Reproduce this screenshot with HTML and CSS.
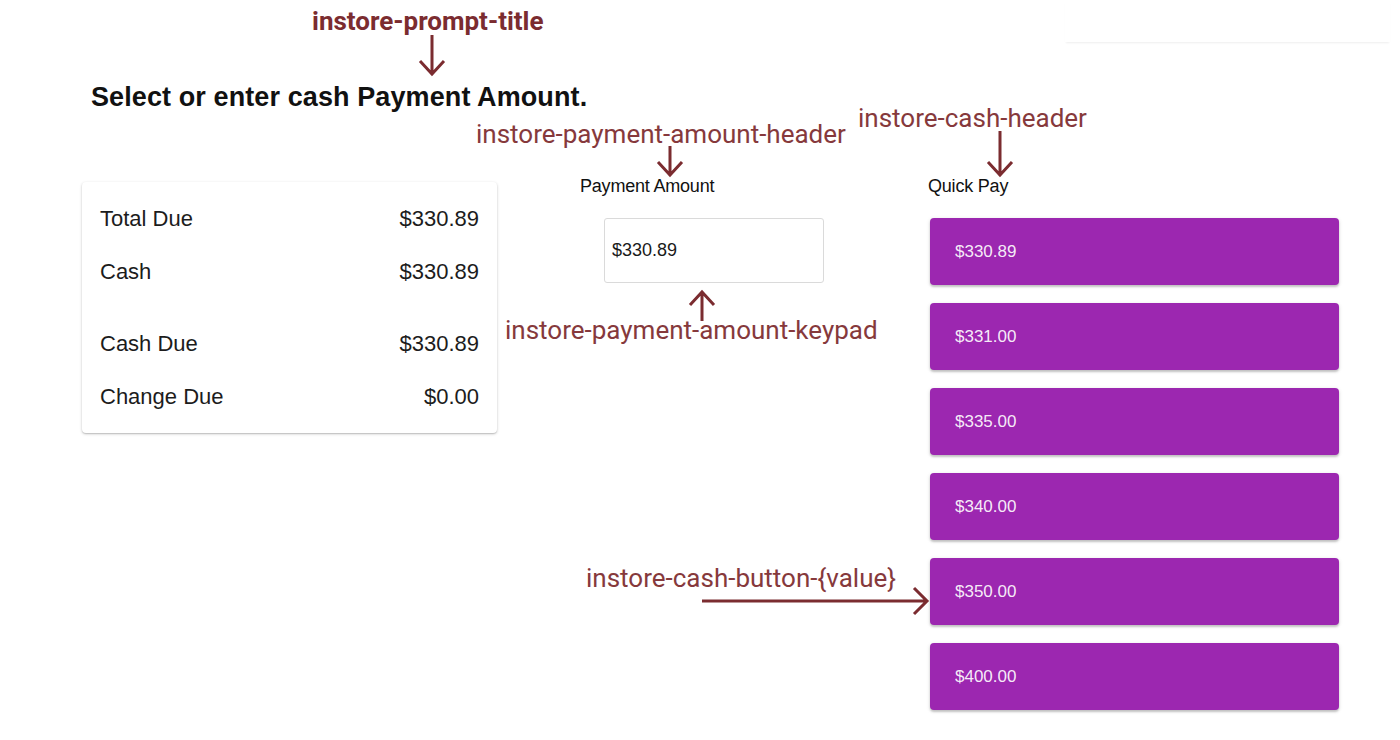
FILE: index.html
```html
<!DOCTYPE html>
<html>
<head>
<meta charset="utf-8">
<link rel="stylesheet" href="styles.css">
</head>
<body>
<div class="page">
  <div class="topbar"><div class="topbox"></div></div>
  <h1 class="prompt-title">Select or enter cash Payment Amount.</h1>
  <div class="content">
    <div class="summary-card">
      <div class="row"><span>Total Due</span><span>$330.89</span></div>
      <div class="row"><span>Cash</span><span>$330.89</span></div>
      <div class="divider"></div>
      <div class="row"><span>Cash Due</span><span>$330.89</span></div>
      <div class="row"><span>Change Due</span><span>$0.00</span></div>
    </div>
    <div class="amount-col">
      <div class="col-header">Payment Amount</div>
      <div class="amount-input">$330.89</div>
    </div>
    <div class="quick-col">
      <div class="col-header">Quick Pay</div>
      <div class="quick-list">
        <button class="cash-btn">$330.89</button>
        <button class="cash-btn">$331.00</button>
        <button class="cash-btn">$335.00</button>
        <button class="cash-btn">$340.00</button>
        <button class="cash-btn">$350.00</button>
        <button class="cash-btn">$400.00</button>
      </div>
    </div>
  </div>

  <div class="annotations">
    <svg class="arrows" width="1400" height="740" viewBox="0 0 1400 740">
      <g fill="none" stroke="#7b2c30" stroke-width="3" stroke-linecap="butt" stroke-linejoin="miter">
        <path d="M432 35 V74 M420 61 L432 74 L444 61"/>
        <path d="M670 146 V175 M658 162 L670 175 L682 162"/>
        <path d="M1000 131 V175 M988 162 L1000 175 L1012 162"/>
        <path d="M702 321 V292 M690 305 L702 292 L714 305"/>
        <path d="M702 601 H927 M914 588 L927 601 L914 614"/>
      </g>
    </svg>
    <div class="note note-bold note-title">instore-prompt-title</div>
    <div class="note note-pay-header">instore-payment-amount-header</div>
    <div class="note note-cash-header">instore-cash-header</div>
    <div class="note note-keypad">instore-payment-amount-keypad</div>
    <div class="note note-button">instore-cash-button-{value}</div>
  </div>
</div>
</body>
</html>
```
FILE: styles.css
```css
html, body {
  margin: 0;
  padding: 0;
  background: #ffffff;
}
body {
  font-family: "Liberation Sans", Arial, sans-serif;
  color: #1a1a1a;
}
.page {
  position: relative;
  width: 1400px;
  height: 740px;
  overflow: hidden;
}
.topbar {
  display: flex;
  justify-content: flex-end;
  padding-right: 10px;
}
.topbox {
  width: 325px;
  height: 42px;
  background: #fff;
  box-shadow: 0 2px 2px -1px rgba(0, 0, 0, 0.07);
}
.prompt-title {
  margin: 40px 0 0 91px;
  font-size: 27px;
  line-height: 31px;
  font-weight: 700;
  color: #111;
  letter-spacing: 0.1px;
}
.content {
  display: flex;
  align-items: flex-start;
  margin-top: 63px;
  padding-left: 82px;
}
.summary-card {
  width: 415px;
  box-sizing: border-box;
  margin-top: 6px;
  padding: 10px 18px;
  background: #fff;
  border-radius: 4px;
  box-shadow: 0 1px 3px rgba(0, 0, 0, 0.22), 0 1px 1px rgba(0, 0, 0, 0.1);
}
.row {
  display: flex;
  justify-content: space-between;
  align-items: center;
  height: 53px;
  font-size: 22px;
  color: #1c1c1c;
}
.divider {
  height: 19px;
}
.amount-col {
  margin-left: 83px;
  width: 244px;
}
.col-header {
  font-size: 18px;
  line-height: 20px;
  color: #111;
  letter-spacing: -0.2px;
}
.amount-input {
  margin: 22px 0 0 24px;
  width: 220px;
  height: 65px;
  box-sizing: border-box;
  border: 1.5px solid #dadada;
  border-radius: 3px;
  padding-left: 7px;
  display: flex;
  align-items: center;
  font-size: 18px;
  color: #1a1a1a;
}
.quick-col {
  margin-left: 104px;
}
.quick-list {
  display: flex;
  flex-direction: column;
  gap: 18px;
  margin-top: 22px;
  margin-left: 2px;
}
.cash-btn {
  width: 409px;
  height: 67px;
  border: none;
  border-radius: 4px;
  background: #9c27b0;
  color: rgba(255, 255, 255, 0.92);
  font-family: "Liberation Sans", Arial, sans-serif;
  font-size: 17px;
  text-align: left;
  padding: 0 0 0 25px;
  box-shadow: 0 2px 2px rgba(0, 0, 0, 0.18), 0 1px 4px rgba(0, 0, 0, 0.12);
}
.annotations {
  position: absolute;
  inset: 0;
  pointer-events: none;
}
.arrows {
  position: absolute;
  left: 0;
  top: 0;
}
.note {
  position: absolute;
  font-family: Roboto, "Liberation Sans", sans-serif;
  font-size: 26px;
  line-height: 30px;
  color: #86393c;
  white-space: nowrap;
}
.note-bold {
  font-weight: 700;
  color: #7b2c30;
}
.note-title { left: 312px; top: 6px; }
.note-pay-header { left: 476px; top: 119px; }
.note-cash-header { left: 858px; top: 103px; }
.note-keypad { left: 505px; top: 315px; }
.note-button { left: 586px; top: 563px; }
```
